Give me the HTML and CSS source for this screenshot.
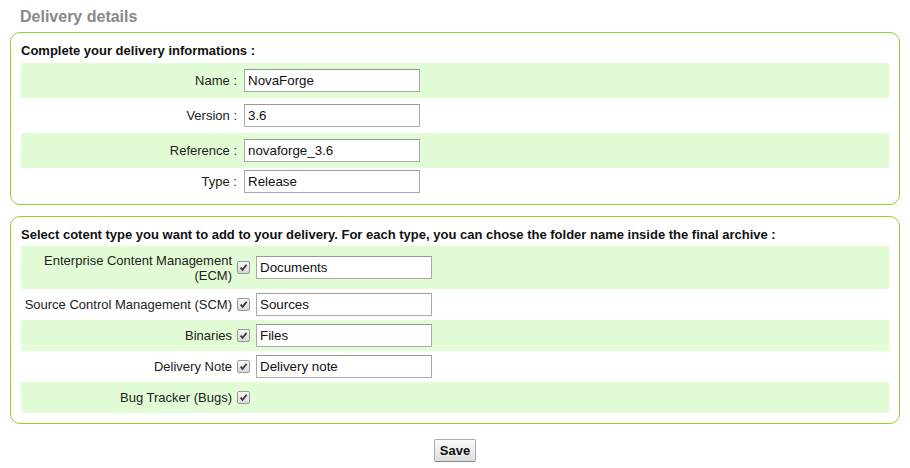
FILE: index.html
```html
<!DOCTYPE html>
<html>
<head>
<meta charset="utf-8">
<title>Delivery details</title>
<link rel="stylesheet" href="styles.css">
</head>
<body>
<div class="page">
  <h1 class="title">Delivery details</h1>

  <div class="box box-info">
    <div class="box-head">Complete your delivery informations :</div>
    <div class="row alt tall">
      <label class="lbl">Name :</label>
      <input class="txt" type="text" value="NovaForge">
    </div>
    <div class="row tall">
      <label class="lbl">Version :</label>
      <input class="txt" type="text" value="3.6">
    </div>
    <div class="row alt tall">
      <label class="lbl">Reference :</label>
      <input class="txt" type="text" value="novaforge_3.6">
    </div>
    <div class="row short">
      <label class="lbl">Type :</label>
      <input class="txt" type="text" value="Release">
    </div>
  </div>

  <div class="box box-content">
    <div class="box-head">Select cotent type you want to add to your delivery. For each type, you can chose the folder name inside the final archive :</div>
    <div class="row alt first">
      <label class="lbl2">Enterprise Content Management (ECM)</label>
      <span class="chk"><svg viewBox="0 0 12 12"><path d="M2.8 6.2 L5 8.6 L9.4 3" fill="none" stroke="#3a3a3a" stroke-width="2"/></svg></span>
      <input class="txt" type="text" value="Documents">
    </div>
    <div class="row item">
      <label class="lbl2">Source Control Management (SCM)</label>
      <span class="chk"><svg viewBox="0 0 12 12"><path d="M2.8 6.2 L5 8.6 L9.4 3" fill="none" stroke="#3a3a3a" stroke-width="2"/></svg></span>
      <input class="txt" type="text" value="Sources">
    </div>
    <div class="row alt item">
      <label class="lbl2">Binaries</label>
      <span class="chk"><svg viewBox="0 0 12 12"><path d="M2.8 6.2 L5 8.6 L9.4 3" fill="none" stroke="#3a3a3a" stroke-width="2"/></svg></span>
      <input class="txt" type="text" value="Files">
    </div>
    <div class="row item">
      <label class="lbl2">Delivery Note</label>
      <span class="chk"><svg viewBox="0 0 12 12"><path d="M2.8 6.2 L5 8.6 L9.4 3" fill="none" stroke="#3a3a3a" stroke-width="2"/></svg></span>
      <input class="txt" type="text" value="Delivery note">
    </div>
    <div class="row alt item">
      <label class="lbl2">Bug Tracker (Bugs)</label>
      <span class="chk"><svg viewBox="0 0 12 12"><path d="M2.8 6.2 L5 8.6 L9.4 3" fill="none" stroke="#3a3a3a" stroke-width="2"/></svg></span>
    </div>
  </div>

  <div class="actions">
    <button class="btn" type="button">Save</button>
  </div>
</div>
</body>
</html>
```

FILE: styles.css
```css
* { box-sizing: border-box; }

body {
  margin: 0;
  font-family: "Liberation Sans", Arial, sans-serif;
  font-size: 13px;
  color: #222;
  background: #fff;
}

.page {
  padding: 8px 10px 0 10px;
}

.title {
  margin: 0 0 6px 0;
  padding-left: 10px;
  font-size: 16px;
  line-height: 18px;
  font-weight: bold;
  color: #888;
}

.box {
  border: 1px solid #99cc33;
  border-radius: 10px;
  padding: 10px 10px 7px 10px;
}

.box-content {
  margin-top: 11px;
  padding-top: 10px;
  padding-bottom: 10px;
}

.box-head {
  font-weight: bold;
  color: #111;
  line-height: 16px;
  margin-bottom: 4px;
}

.box-content .box-head {
  margin-bottom: 3px;
}

.row {
  display: flex;
  align-items: center;
}

.row.alt {
  background: #e2fcd5;
}

.row.tall { height: 35px; }
.row.short { height: 29px; padding: 2px 0 4px 0; }
.row.first { height: 43px; }
.row.item { height: 31px; }

.lbl {
  width: 216px;
  margin-right: 7px;
  text-align: right;
  line-height: 15px;
}

.lbl2 {
  width: 211px;
  text-align: right;
  line-height: 15px;
}

.txt {
  width: 176px;
  height: 23px;
  margin: 0;
  padding: 0 3px;
  border: 1px solid #a9a9a9;
  border-top-color: #999;
  background: #fff;
  font-family: "Liberation Sans", Arial, sans-serif;
  font-size: 13.33px;
  color: #111;
}

.chk {
  display: inline-flex;
  width: 13px;
  height: 13px;
  margin: 0 6px 0 5px;
  border: 1px solid #999;
  border-radius: 2px;
  background: linear-gradient(#f8f8f8, #d8d8d8);
  align-items: center;
  justify-content: center;
}

.chk svg {
  display: block;
  width: 11px;
  height: 11px;
}

.actions {
  display: flex;
  justify-content: center;
  margin-top: 15px;
}

.btn {
  width: 42px;
  height: 23px;
  padding: 0;
  border: 1px solid #aaa;
  border-bottom-color: #888;
  border-radius: 2px;
  background: linear-gradient(#fafafa, #dedede);
  font-family: "Liberation Sans", Arial, sans-serif;
  font-size: 13px;
  font-weight: bold;
  color: #111;
}
```
